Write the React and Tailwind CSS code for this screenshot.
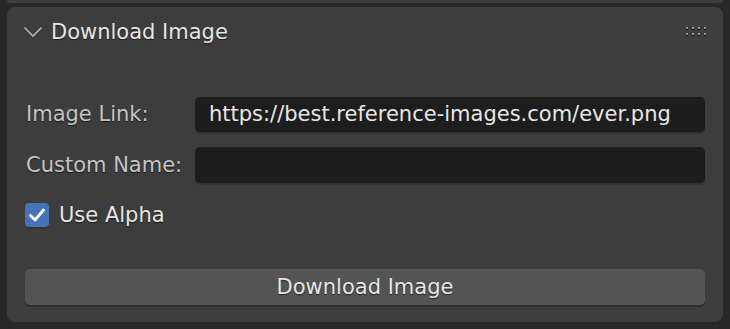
export default function App() {
  const shadow = { textShadow: "0 1px 1px rgba(0,0,0,0.6)" };
  return (
    <div className="w-[730px] h-[329px] bg-[#282828] overflow-hidden font-['DejaVu_Sans',sans-serif] text-[21px] leading-none">
      <div className="mx-[7px] h-[3px] bg-[#3d3d3d] rounded-b-[6px]" />
      <div className="mx-[7px] mt-[4px] h-[315px] bg-[#3d3d3d] rounded-[8px] flex flex-col">
        <div className="h-[50px] flex items-center pl-[16px] pr-[15px]">
          <svg width="20" height="12" viewBox="0 0 20 12" className="mr-[8px]">
            <path d="M1.5 1.5 L10 10 L18.5 1.5" fill="none" stroke="#b4b4b4" strokeWidth="1.6" />
          </svg>
          <span className="text-[#e6e6e6]" style={shadow}>Download Image</span>
          <div className="flex-1" />
          <svg width="22" height="10" viewBox="0 0 22 10">
            {[0, 6, 12, 18].map((x) => (
              <g key={x}>
                <rect x={x} y="0" width="2" height="2" fill="#9a9a9a" />
                <rect x={x} y="2" width="2" height="1" fill="#000" />
                <rect x={x} y="6" width="2" height="2" fill="#9a9a9a" />
                <rect x={x} y="8" width="2" height="1" fill="#000" />
              </g>
            ))}
          </svg>
        </div>
        <div className="flex flex-col px-[18px] pt-[40px]">
          <div className="flex items-center h-[35px]">
            <div className="w-[170px] pl-[1px] text-[#c4c4c4]" style={shadow}>Image Link:</div>
            <div className="flex-1 h-full bg-[#1d1d1d] rounded-[5px] flex items-center pl-[14px] text-[#e6e6e6] shadow-[0_2px_0_#333]">
              https://best.reference-images.com/ever.png
            </div>
          </div>
          <div className="flex items-center h-[36px] mt-[15px]">
            <div className="w-[170px] pl-[1px] text-[#c4c4c4]" style={shadow}>Custom Name:</div>
            <div className="flex-1 h-full bg-[#1d1d1d] rounded-[5px] shadow-[0_2px_0_#333]" />
          </div>
          <div className="flex items-center h-[24px] mt-[20px]">
            <div className="w-[24px] h-[24px] rounded-[4px] bg-[#4772b3] flex items-center justify-center shadow-[0_2px_0_#333]">
              <svg width="18" height="16" viewBox="0 0 18 16">
                <path d="M2.5 8.5 L7 13 L15.5 3" fill="none" stroke="#fff" strokeWidth="2.8" strokeLinecap="round" strokeLinejoin="round" />
              </svg>
            </div>
            <span className="ml-[10px] text-[#e6e6e6]" style={shadow}>Use Alpha</span>
          </div>
          <div className="mt-[42px] h-[36px] bg-[#545454] rounded-[5px] flex items-center justify-center text-[#e6e6e6] shadow-[0_2px_0_#2e2e2e]" style={shadow}>
            Download Image
          </div>
        </div>
      </div>
    </div>
  );
}
